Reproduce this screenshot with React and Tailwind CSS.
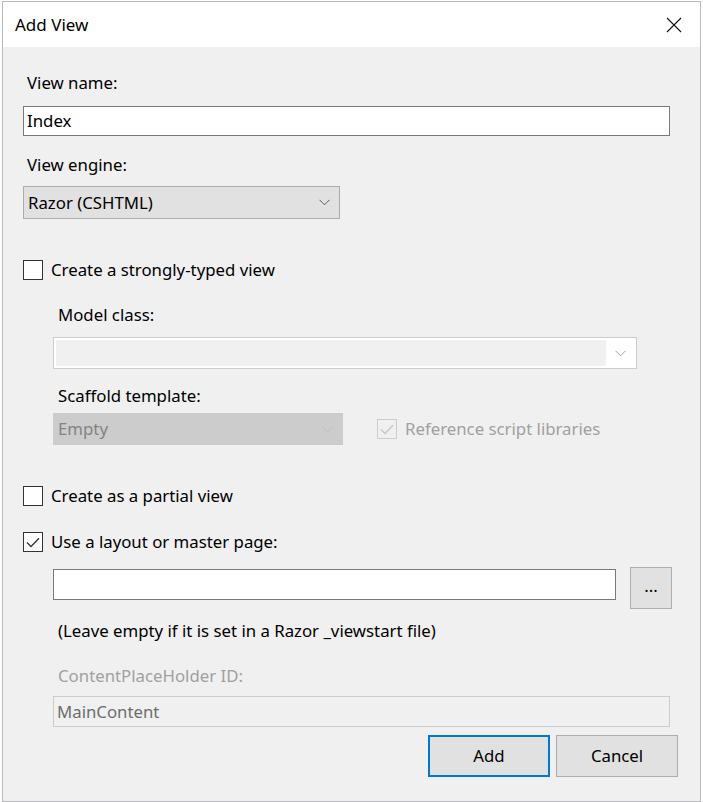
import React from 'react';

const font = { fontFamily: '"Noto Sans", "Open Sans", sans-serif' };

function Chevron({ className = 'stroke-[#5a5a5a]' }) {
  return (
    <svg width="11" height="7" viewBox="0 0 11 7" className={className} fill="none">
      <path d="M0.5 0.8 L5.5 5.8 L10.5 0.8" strokeWidth="1" />
    </svg>
  );
}

function CheckBox({ checked, disabled }) {
  return (
    <div
      className={`w-[20px] h-[20px] border flex items-center justify-center ${
        disabled ? 'border-[#cccccc] bg-[#f0f0f0]' : 'border-[#333333] bg-white'
      }`}
    >
      {checked && (
        <svg width="14" height="11" viewBox="0 0 14 11" fill="none">
          <path
            d="M1 5.5 L5 9.5 L13 1.2"
            strokeWidth="1.3"
            className={disabled ? 'stroke-[#c4c4c4]' : 'stroke-[#333333]'}
          />
        </svg>
      )}
    </div>
  );
}

function CheckRow({ label, checked }) {
  return (
    <div className="flex items-center h-[22px]">
      <CheckBox checked={checked} />
      <span className="ml-[8px] text-black">{label}</span>
    </div>
  );
}

export default function App() {
  return (
    <div className="w-[703px] h-[802px] bg-white" style={font}>
      <div className="ml-[2px] mt-[1px] w-[699px] h-[801px] border border-[#b9b9bf] bg-[#f0f0f0] flex flex-col">
        {/* title bar */}
        <div className="h-[45px] bg-white flex items-center justify-between pl-[12px] pr-[18px]">
          <span className="text-[17px] text-black">Add View</span>
          <svg width="16" height="16" viewBox="0 0 16 16" fill="none">
            <path d="M1 1 L15 15 M15 1 L1 15" stroke="#111" strokeWidth="1.1" />
          </svg>
        </div>

        <div className="pl-[20px] pr-[30px] text-[16.8px] text-black">
          <div className="mt-[25px] h-[22px] leading-[22px] pl-[4px]">View name:</div>
          <div className="mt-[12px] h-[30px] border border-[#7a7a7a] bg-white flex items-center pl-[3px]">
            Index
          </div>

          <div className="mt-[18px] h-[22px] leading-[22px] pl-[4px]">View engine:</div>
          <div className="mt-[10px] w-[317px] h-[33px] border border-[#adadad] bg-[#e1e1e1] flex items-center justify-between pl-[4px] pr-[9px]">
            <span>Razor (CSHTML)</span>
            <Chevron />
          </div>

          <div className="mt-[40px]">
            <CheckRow label="Create a strongly-typed view" />
          </div>

          <div className="pl-[30px]">
            <div className="mt-[23px] h-[22px] leading-[22px] pl-[5px]">Model class:</div>
            <div className="mt-[11px] w-[584px] h-[32px] border border-[#cccccc] bg-white flex p-[2px]">
              <div className="flex-1 bg-[#f0f0f0]" />
              <div className="w-[28px] flex items-center justify-center">
                <Chevron className="stroke-[#a0a0a0]" />
              </div>
            </div>

            <div className="mt-[16px] h-[22px] leading-[22px] pl-[5px]">Scaffold template:</div>
            <div className="mt-[6px] flex items-center">
              <div className="w-[290px] h-[32px] border border-[#cccccc] bg-[#cccccc] flex items-center justify-between pl-[4px] pr-[9px] text-[#838383]">
                <span>Empty</span>
                <Chevron className="stroke-[#bdbdbd]" />
              </div>
              <div className="ml-[34px] flex items-center">
                <CheckBox checked disabled />
                <span className="ml-[8px] text-[#a0a0a0]">Reference script libraries</span>
              </div>
            </div>
          </div>

          <div className="mt-[40px]">
            <CheckRow label="Create as a partial view" />
          </div>
          <div className="mt-[24px]">
            <CheckRow label="Use a layout or master page:" checked />
          </div>

          <div className="pl-[30px]">
            <div className="mt-[14px] flex items-start">
              <div className="shrink-0 mt-[2px] w-[563px] h-[31px] border border-[#7a7a7a] bg-white" />
              <div className="shrink-0 ml-[14px] w-[42px] h-[42px] border border-[#adadad] bg-[#e1e1e1] flex items-center justify-center pb-[4px]">
                ...
              </div>
            </div>
            <div className="mt-[11px] h-[22px] leading-[22px] pl-[5px]">
              (Leave empty if it is set in a Razor _viewstart file)
            </div>
            <div className="mt-[23px] h-[22px] leading-[22px] pl-[5px] text-[#a0a0a0]">
              ContentPlaceHolder ID:
            </div>
            <div className="mt-[9px] h-[31px] border border-[#cccccc] bg-[#f0f0f0] flex items-center pl-[3px] text-[#6d6d6d]">
              MainContent
            </div>
          </div>

          <div className="mt-[8px] flex justify-end gap-[6px] mr-[-8px]">
            <div className="w-[122px] h-[42px] border-2 border-[#0078d7] bg-[#e1e1e1] flex items-center justify-center">
              Add
            </div>
            <div className="w-[122px] h-[42px] border border-[#adadad] bg-[#e1e1e1] flex items-center justify-center">
              Cancel
            </div>
          </div>
        </div>
      </div>
    </div>
  );
}
